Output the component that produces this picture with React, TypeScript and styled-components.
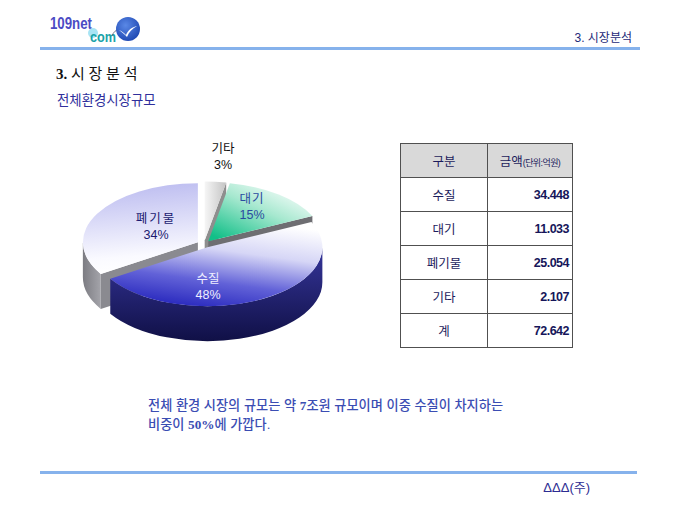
import React from "react";
import styled, { createGlobalStyle } from "styled-components";

const GlobalStyle = createGlobalStyle`
  html, body {
    margin: 0;
    padding: 0;
    background: #ffffff;
  }
  body {
    font-family: "Liberation Sans", "Noto Sans CJK KR", sans-serif;
  }
`;

const CX = 144;
const CY = 113;
const RX = 115;
const RY = 59;
const DEPTH = 35;
const EXPLODE = 7;

interface Slice {
  key: string;
  from: number;
  to: number;
  top: string;
  wall: string;
  cut: string;
}

const slices: Slice[] = [
  { key: "etc", from: 0, to: 10.8, top: "url(#gEtcTop)", wall: "#9a9a9a", cut: "#8e8e8e" },
  { key: "air", from: 10.8, to: 64.8, top: "url(#gAirTop)", wall: "#7d7d7d", cut: "#6e6e72" },
  { key: "waste", from: 237.6, to: 360, top: "url(#gWasteTop)", wall: "url(#gWasteWall)", cut: "#8a8a90" },
  { key: "water", from: 64.8, to: 237.6, top: "url(#gWaterTop)", wall: "url(#gWaterWall)", cut: "#30306a" },
];

const rad = (d: number) => (d * Math.PI) / 180;

function slicePaths(s: Slice) {
  const mid = rad((s.from + s.to) / 2);
  const ox = EXPLODE * Math.sin(mid);
  const oy = -EXPLODE * Math.cos(mid) * (RY / RX);
  const p = (deg: number, dz = 0) => {
    const r = rad(deg);
    const x = CX + ox + RX * Math.sin(r);
    const y = CY + oy - RY * Math.cos(r) + dz;
    return `${x.toFixed(2)} ${y.toFixed(2)}`;
  };
  const apex = (dz = 0) => `${(CX + ox).toFixed(2)} ${(CY + oy + dz).toFixed(2)}`;
  const large = s.to - s.from > 180 ? 1 : 0;
  const top = `M${apex()} L${p(s.from)} A${RX} ${RY} 0 ${large} 1 ${p(s.to)} Z`;

  // front part of the rim
  const a1 = Math.max(s.from, 90);
  const a2 = Math.min(s.to, 270);
  const outer =
    a2 > a1
      ? `M${p(a1)} A${RX} ${RY} 0 0 1 ${p(a2)} L${p(a2, DEPTH)} A${RX} ${RY} 0 0 0 ${p(a1, DEPTH)} Z`
      : null;

  const cut = (deg: number) => `M${apex()} L${p(deg)} L${p(deg, DEPTH)} L${apex(DEPTH)} Z`;
  const cuts: string[] = [];
  if (Math.sin(rad(s.to)) > 0.01) cuts.push(cut(s.to));
  if (Math.sin(rad(s.from)) < -0.01) cuts.push(cut(s.from));
  return { top, outer, cuts };
}

const Slide = styled.div`
  width: 680px;
  height: 510px;
  background: #ffffff;
  display: flex;
  flex-direction: column;
  overflow: hidden;
`;

const Header = styled.header`
  margin: 0 40px;
  padding: 15px 8px 2px 10px;
  display: flex;
  justify-content: space-between;
  align-items: flex-end;
  border-bottom: 3px solid #86b2ec;
`;

const HeaderTitle = styled.div`
  font-family: "Liberation Sans", "Noto Sans CJK KR", sans-serif;
  font-size: 12px;
  line-height: 14px;
  color: #1d2a78;
`;

const SectionTitle = styled.h1`
  margin: 16px 0 0 56px;
  font-family: "Liberation Serif", "Noto Sans CJK KR", serif;
  font-weight: 400;
  font-size: 15px;
  line-height: 17px;
  color: #111111;
`;

const Num = styled.b`
  font-family: "Liberation Serif", serif;
  font-weight: 700;
`;

const SubTitle = styled.h2`
  margin: 8px 0 0 57px;
  font-family: "Noto Sans CJK KR", sans-serif;
  font-weight: 400;
  font-size: 13.4px;
  line-height: 16px;
  color: #2f2f9c;
`;

const ContentRow = styled.section`
  margin-top: 24px;
  padding-left: 60px;
  display: flex;
  align-items: flex-start;
  gap: 50px;
`;

const ChartLabel = styled.text<{ $tone: string; $spread?: number }>`
  font-family: "Liberation Sans", "Noto Sans CJK KR", sans-serif;
  font-size: 12.5px;
  letter-spacing: ${({ $spread }) => $spread ?? 0}px;
  fill: ${({ $tone }) => $tone};
`;

const DataTable = styled.table`
  margin-top: 12px;
  width: 173px;
  border-collapse: collapse;
  font-family: "Liberation Sans", "Noto Sans CJK KR", sans-serif;
`;

const HeadCell = styled.th`
  height: 33px;
  padding: 0;
  background: #d9d9d9;
  border: 1px solid #505050;
  font-weight: 400;
  font-size: 12.5px;
  color: #1c1c5c;
  white-space: nowrap;
`;

const Small = styled.span`
  font-size: 9px;
  letter-spacing: -0.6px;
`;

const NameCell = styled.td`
  width: 86px;
  height: 33px;
  padding: 0;
  border: 1px solid #505050;
  text-align: center;
  font-size: 12.5px;
  color: #1c1c5c;
`;

const ValueCell = styled.td`
  height: 33px;
  padding: 0 3px 0 0;
  border: 1px solid #505050;
  text-align: right;
  font-size: 12.5px;
  font-weight: 700;
  letter-spacing: -0.5px;
  color: #16165a;
`;

const Summary = styled.p`
  margin: 45px 0 0 148px;
  font-family: "Liberation Sans", "Noto Sans CJK KR", sans-serif;
  font-size: 13.2px;
  line-height: 19px;
  font-weight: 500;
  color: #3b4db3;
`;

const SerifNum = styled.span`
  font-family: "Liberation Serif", serif;
  font-weight: 700;
`;

const Footer = styled.footer`
  margin: 37px 43px 0 40px;
  padding: 6px 47px 0 0;
  border-top: 3px solid #86b2ec;
  text-align: right;
  font-family: "Liberation Sans", "Noto Sans CJK KR", sans-serif;
  font-size: 13px;
  line-height: 16px;
  color: #2d2d92;
`;

const Logo = () => (
  <svg width="92" height="30" viewBox="0 0 92 30">
    <defs>
      <radialGradient id="gBadge" cx="0.4" cy="0.35" r="0.7">
        <stop offset="0" stopColor="#5a88e6" />
        <stop offset="1" stopColor="#1d47b2" />
      </radialGradient>
    </defs>
    <text
      x="0"
      y="14"
      fontFamily="Liberation Sans, sans-serif"
      fontWeight="700"
      fontSize="16"
      textLength="42"
      lengthAdjust="spacingAndGlyphs"
      fill="#4b4bc4"
    >
      109net
    </text>
    <circle cx="43" cy="18" r="5" fill="#a8e4f4" />
    <text
      x="40"
      y="27"
      fontFamily="Liberation Sans, sans-serif"
      fontWeight="700"
      fontSize="15"
      textLength="26"
      lengthAdjust="spacingAndGlyphs"
      fill="#1aa3a8"
    >
      com
    </text>
    <path d="M62 21 Q64 15 70 14" stroke="#555a70" strokeWidth="0.8" fill="none" />
    <circle cx="78" cy="14" r="12" fill="url(#gBadge)" />
    <path
      d="M69 15 C72 16 74 18 76 20 C78 15 82 12 87 11 C82 14 79 17 77 22 C75 20 72 17 69 15 Z"
      fill="#ffffff"
    />
  </svg>
);

const PieChart = () => (
  <svg width="290" height="220" viewBox="0 0 290 220">
    <defs>
      <linearGradient id="gEtcTop" x1="0" y1="0" x2="1" y2="0">
        <stop offset="0" stopColor="#f6f6f6" />
        <stop offset="1" stopColor="#c4c4c4" />
      </linearGradient>
      <linearGradient id="gAirTop" x1="0.1" y1="0.95" x2="0.85" y2="0.05">
        <stop offset="0" stopColor="#12bf88" />
        <stop offset="0.55" stopColor="#a6e8cf" />
        <stop offset="1" stopColor="#ffffff" />
      </linearGradient>
      <linearGradient id="gWasteTop" x1="0.4" y1="0" x2="0.5" y2="1">
        <stop offset="0" stopColor="#bcbcf0" />
        <stop offset="0.8" stopColor="#fafaff" />
        <stop offset="1" stopColor="#ffffff" />
      </linearGradient>
      <linearGradient id="gWasteWall" x1="0" y1="0" x2="1" y2="0">
        <stop offset="0" stopColor="#7c7c82" />
        <stop offset="1" stopColor="#a4a4aa" />
      </linearGradient>
      <linearGradient id="gWaterTop" x1="0.7" y1="0" x2="0.35" y2="1">
        <stop offset="0" stopColor="#ffffff" />
        <stop offset="0.35" stopColor="#d6d6f6" />
        <stop offset="0.7" stopColor="#6262d8" />
        <stop offset="1" stopColor="#2a2abe" />
      </linearGradient>
      <linearGradient id="gWaterWall" x1="0" y1="0" x2="0" y2="1">
        <stop offset="0" stopColor="#36369c" />
        <stop offset="1" stopColor="#101046" />
      </linearGradient>
    </defs>
    {slices.map((s) => {
      const { top, outer, cuts } = slicePaths(s);
      return (
        <g key={s.key}>
          {cuts.map((d, i) => (
            <path key={i} d={d} fill={s.cut} />
          ))}
          {outer && <path d={outer} fill={s.wall} />}
          <path d={top} fill={s.top} />
        </g>
      );
    })}
    <ChartLabel $tone="#111111" x="163" y="21.5" textAnchor="middle">기타</ChartLabel>
    <ChartLabel $tone="#111111" x="163" y="37.5" textAnchor="middle">3%</ChartLabel>
    <ChartLabel $tone="#2a4aa0" $spread={1} x="192" y="71.5" textAnchor="middle">대기</ChartLabel>
    <ChartLabel $tone="#2a4aa0" x="192" y="87.5" textAnchor="middle">15%</ChartLabel>
    <ChartLabel $tone="#1a1a70" $spread={2} x="96" y="91.5" textAnchor="middle">폐기물</ChartLabel>
    <ChartLabel $tone="#1a1a70" x="96" y="107.5" textAnchor="middle">34%</ChartLabel>
    <ChartLabel $tone="#eeeeff" x="148" y="151.5" textAnchor="middle">수질</ChartLabel>
    <ChartLabel $tone="#eeeeff" x="148" y="167.5" textAnchor="middle">48%</ChartLabel>
  </svg>
);

const rows = [
  { name: "수질", value: "34.448" },
  { name: "대기", value: "11.033" },
  { name: "폐기물", value: "25.054" },
  { name: "기타", value: "2.107" },
  { name: "계", value: "72.642" },
];

export default function App() {
  return (
    <>
      <GlobalStyle />
      <Slide>
        <Header>
          <Logo />
          <HeaderTitle>3. 시장분석</HeaderTitle>
        </Header>
        <SectionTitle>
          <Num>3.</Num> 시 장 분 석
        </SectionTitle>
        <SubTitle>전체환경시장규모</SubTitle>
        <ContentRow>
          <PieChart />
          <DataTable>
            <thead>
              <tr>
                <HeadCell>구분</HeadCell>
                <HeadCell>
                  금액<Small>(단위:억원)</Small>
                </HeadCell>
              </tr>
            </thead>
            <tbody>
              {rows.map((r) => (
                <tr key={r.name}>
                  <NameCell>{r.name}</NameCell>
                  <ValueCell>{r.value}</ValueCell>
                </tr>
              ))}
            </tbody>
          </DataTable>
        </ContentRow>
        <Summary>
          전체 환경 시장의 규모는 약 <SerifNum>7</SerifNum>조원 규모이며 이중 수질이 차지하는
          <br />
          비중이 <SerifNum>50%</SerifNum>에 가깝다.
        </Summary>
        <Footer>ΔΔΔ(주)</Footer>
      </Slide>
    </>
  );
}
